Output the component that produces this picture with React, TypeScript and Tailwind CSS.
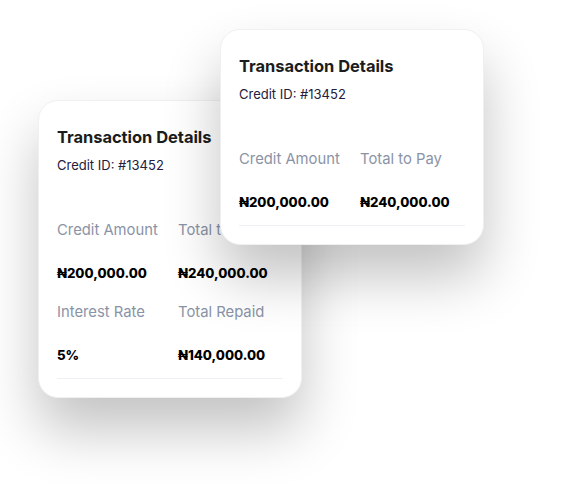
import React from "react";

type Item = { label: string; value: string };

const DetailsCard = ({ rows }: { rows: Item[][] }) => {
  return (
    <div className="w-[264px] rounded-[20px] bg-white px-[18px] pt-6 pb-[18px] shadow-[0_32px_56px_rgba(0,0,0,0.24)] border border-[#f0f0f0]">
      <h3 className="text-[16.5px] leading-6 font-bold text-[#1c1c1c] tracking-[-0.05px]">
        Transaction Details
      </h3>
      <p className="mt-[6px] text-[13px] leading-5 text-[#22203d]">Credit ID: #13452</p>

      <div className="mt-[45px] flex flex-col gap-[19px]">
        {rows.map((row, i) => (
          <div key={i} className="grid grid-cols-[121px_1fr]">
            {row.map((item) => (
              <div key={item.label} className="flex flex-col gap-[23px]">
                <span className="text-[14.8px] leading-5 text-[#8a93a6] whitespace-nowrap overflow-hidden">
                  {item.label}
                </span>
                <span className="text-[13.2px] leading-5 font-extrabold text-black whitespace-nowrap">
                  {item.value}
                </span>
              </div>
            ))}
          </div>
        ))}
      </div>

      <div className="mt-[13px] h-px bg-[#eef0f3]" />
    </div>
  );
};

export default function App() {
  const backRows: Item[][] = [
    [
      { label: "Credit Amount", value: "₦200,000.00" },
      { label: "Total to Pay", value: "₦240,000.00" },
    ],
    [
      { label: "Interest Rate", value: "5%" },
      { label: "Total Repaid", value: "₦140,000.00" },
    ],
  ];
  const frontRows: Item[][] = [backRows[0]];

  return (
    <div className="relative w-[575px] h-[497px] bg-white overflow-hidden font-['Inter',sans-serif]">
      <div className="ml-[38px] pt-[100px]">
        <DetailsCard rows={backRows} />
      </div>
      {/* front card overlaps the back one */}
      <div className="absolute left-[220px] top-[29px]">
        <DetailsCard rows={frontRows} />
      </div>
    </div>
  );
}
